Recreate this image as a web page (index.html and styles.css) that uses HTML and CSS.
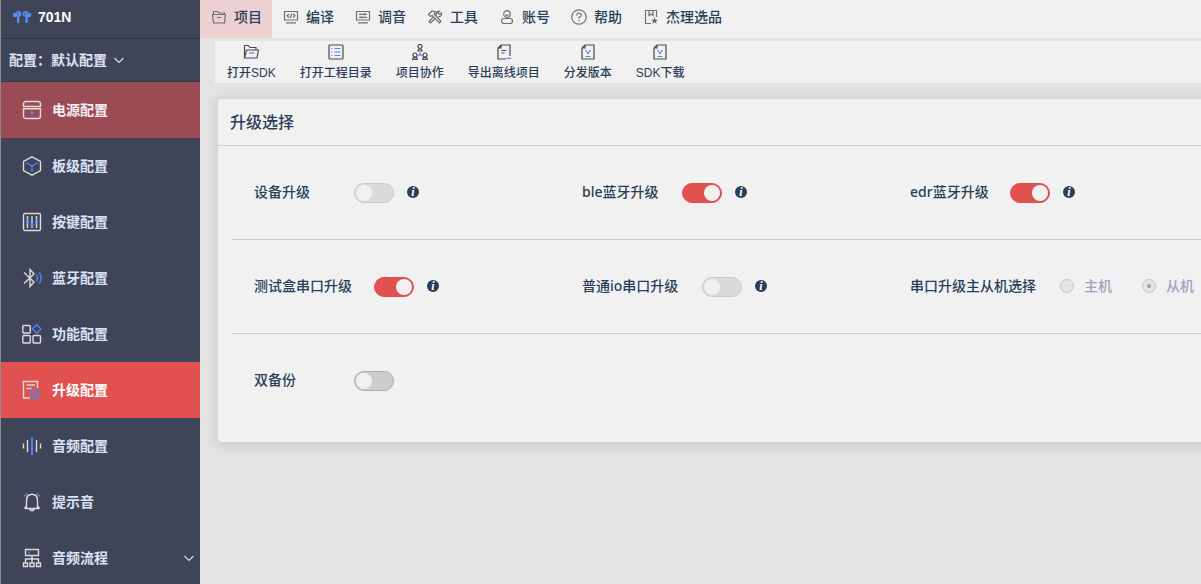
FILE: index.html
```html
<!DOCTYPE html>
<html lang="zh-CN">
<head>
    <meta charset="UTF-8">
    <meta name="viewport" content="width=device-width, initial-scale=1.0">
    <title>701N</title>
    <link rel="stylesheet" href="styles.css">
</head>
<body>
    <aside class="sidebar">
        <div class="brand">
            <svg class="icon" viewBox="0 0 20 20">
                <g class="bud"><circle cx="3" cy="8" r="2.200"/><circle cx="6.500" cy="6.800" r="2.900"/><circle cx="13.500" cy="6.800" r="2.900"/><circle cx="17" cy="8" r="2.200"/><rect x="5" y="9" width="2.200" height="7"/><rect x="13.500" y="9" width="2.200" height="7"/></g>
                <path class="bud-line" d="M4.500 5l1.500 4M12 5l1.500 4M7 6.500h1.500M15 6.500h1.500"/>
            </svg>
            <span class="brand-name">701N</span>
        </div>
        <div class="config">
            <label for="config">配置：</label>
            <div class="config-select">
                <select id="config"><option>默认配置</option></select>
                <svg class="chevron" viewBox="0 0 10 10"><path d="M.5 3L5 7.500 9.500 3"/></svg>
            </div>
        </div>
        <nav class="menu">
            <a class="menu-item warm" href="#">
                <svg class="icon" viewBox="0 0 20 20"><path d="M1.500 6.500V4q0-2.500 2.500-2.500h12q2.500 0 2.500 2.500v2.500zM1.500 8.800h17v7.200q0 2.500-2.500 2.500H4q-2.500 0-2.500-2.500z"/><path class="bolt" d="M10.500 9.500L7.500 13.500h2.200l-.7 2.800 3.300-4h-2.200z"/></svg>
                <span>电源配置</span>
            </a>
            <a class="menu-item" href="#">
                <svg class="icon" viewBox="0 0 20 20"><path d="M10 .9l8.500 4.600v9L10 19.100l-8.500-4.600v-9z"/><path class="blue" d="M4.500 6.800L10 10l5.500-3.200M10 10v6"/></svg>
                <span>板级配置</span>
            </a>
            <a class="menu-item" href="#">
                <svg class="icon" viewBox="0 0 20 20"><rect x="1.500" y="1.500" width="17" height="17" rx="1.500"/><path d="M5.500 4v12M10 4v12M14.500 4v12"/><g class="blue"><circle cx="5.500" cy="9.500" r="1.200"/><circle cx="10" cy="13" r="1.200"/><circle cx="14.500" cy="9.500" r="1.200"/></g></svg>
                <span>按键配置</span>
            </a>
            <a class="menu-item" href="#">
                <svg class="icon" viewBox="0 0 20 20"><path d="M2 4.500L12 14l-4 4.500v-17L12 6 2 15.500"/><path class="blue" d="M14.500 6.500q2 3.500 0 7M17.300 4.500q3.500 5.500 0 11"/></svg>
                <span>蓝牙配置</span>
            </a>
            <a class="menu-item" href="#">
                <svg class="icon" viewBox="0 0 20 20"><rect x=".8" y="1.500" width="7.500" height="7.500" rx="1"/><rect x=".8" y="11.500" width="7.500" height="7.500" rx="1"/><rect x="11" y="11.500" width="7.500" height="7.500" rx="1"/><path class="blue" d="M14.800.7l4.300 4.300-4.300 4.300L10.500 5z"/></svg>
                <span>功能配置</span>
            </a>
            <a class="menu-item active" href="#">
                <svg class="icon" viewBox="0 0 20 20"><path d="M8 18H1.500V1.500h14V8M4.500 5h8.500M4.500 8.500h5"/><path class="blue" d="M13 9.800l4 1.500v3.500q-.8 2.700-4 4-3.200-1.300-4-4v-3.500zM11 14.300l1.500 1.500 2.700-2.700"/></svg>
                <span>升级配置</span>
            </a>
            <a class="menu-item" href="#">
                <svg class="icon" viewBox="0 0 20 20"><path d="M1.500 7.500v5M5.500 4v12M14.500 4v12M18.500 7.500v5"/><path class="blue thick" d="M10 1v18"/></svg>
                <span>音频配置</span>
            </a>
            <a class="menu-item" href="#">
                <svg class="icon" viewBox="0 0 20 20"><path d="M2.500 16.500h15M4.500 16.500V9Q4.500 2.300 10 2.300T15.500 9v7.500M2.500 16.500l2-2.500M17.500 16.500l-2-2.500M7.500 17q2.500 3.500 5 0"/><path class="blue" d="M2 4.500l3-3M18 4.500l-3-3"/></svg>
                <span>提示音</span>
            </a>
            <a class="menu-item" href="#">
                <svg class="icon" viewBox="0 0 20 20"><path d="M3.500 1.500h13v6h-13zM10 7.500v7M3.500 14.500v-3.500h13v3.500M1.500 15h4v3.500h-4zM8 15h4v3.500H8zM14.500 15h4v3.500h-4z"/><path class="blue" d="M6 4.500h2"/></svg>
                <span>音频流程</span>
                <svg class="chevron" viewBox="0 0 10 10"><path d="M.5 3L5 7.500 9.500 3"/></svg>
            </a>
        </nav>
    </aside>

    <div class="content">
        <nav class="tabs">
            <a class="tab current" href="#">
                <svg viewBox="0 0 16 16"><path d="M2.500 14L1.500 5.500h13L13.500 14zM2.500 5.500v-3h4l1.500 1.500h5.500v1.500M6 8.500h4"/></svg>项目</a>
            <a class="tab" href="#">
                <svg viewBox="0 0 16 16"><path d="M1.500 2.500h13v8.500h-13zM3 13.800h10M6 5L4 6.800l2 1.800M10 5l2 1.800-2 1.800M8.700 4.500L7.300 9"/></svg>编译</a>
            <a class="tab" href="#">
                <svg viewBox="0 0 16 16"><path d="M1.500 2.500h13v8.500h-13zM3 13.800h10M4 5.300h8M4 8.300h8M9.500 4.300v2M6.500 7.300v2"/></svg>调音</a>
            <a class="tab" href="#">
                <svg viewBox="0 0 16 16"><path d="M1.500 5.500L5 2l4 1-2 2 7 7.500-1.500 1.500L5 6.500l-1.500 1zM9.500 6.500Q8.500 2.500 12.500 2L11 4l1.500 1.500L14.500 4Q15 8 11 7.800M6 8.500l-4 4L3.500 14l4.200-4"/></svg>工具</a>
            <a class="tab" href="#">
                <svg viewBox="0 0 16 16"><circle cx="8" cy="5" r="3.300"/><path d="M6.500 5.800q1.500 1.200 3 0"/><rect x="2.500" y="9.500" width="11" height="5" rx="2.500"/></svg>账号</a>
            <a class="tab" href="#">
                <svg viewBox="0 0 16 16"><circle cx="8" cy="8" r="7.200"/><path d="M5.800 6.500Q5.800 4 8 4t2.200 2.200Q10.200 7.500 8 8.300v1.500M8 11v1.300"/></svg>帮助</a>
            <a class="tab" href="#">
                <svg viewBox="0 0 16 16"><path d="M8 14.500H2.500v-13h11V8M6 1.500v5L8 5l2 1.500v-5"/><path class="star" d="M11.500 8.500l1 2.200h2.300L13 12.200l.7 2.500-2.200-1.400-2.200 1.400.7-2.500-1.800-1.500h2.300z"/></svg>杰理选品</a>
        </nav>

        <div class="toolbar">
            <button class="tool" type="button">
                <svg viewBox="0 0 16 16"><path d="M1.500 14V1.500h4L7 3.500h6v2.500M1.500 14L3.500 6h12L14 14z"/><path class="blue" d="M6 9h5.500"/></svg>打开SDK</button>
            <button class="tool" type="button">
                <svg viewBox="0 0 16 16"><rect x="1" y="1" width="14" height="14" rx="1"/><path class="blue" d="M3.500 4.500h1M6.500 4.500h6M3.500 8h1M6.500 8h6M3.500 11.500h1M6.500 11.500h6"/></svg>打开工程目录</button>
            <button class="tool" type="button">
                <svg viewBox="0 0 16 16"><circle cx="8" cy="2.500" r="2"/><path d="M6 7q0-2 2-2t2 2z"/><circle cx="3" cy="11" r="2"/><path d="M.7 15.300q0-2 2.300-2t2.300 2z"/><circle cx="13" cy="11" r="2"/><path d="M10.700 15.300q0-2 2.300-2t2.300 2z"/><path class="blue" d="M8 8.500v1.500L6.200 12M8 10l1.800 2"/></svg>项目协作</button>
            <button class="tool" type="button">
                <svg viewBox="0 0 16 16"><path d="M14 12V1H5L2 4v11h8M5 1v3H2M5.500 6.500h5M5.500 9h3"/><path class="blue" d="M10.500 14.300h4.500"/></svg>导出离线项目</button>
            <button class="tool" type="button">
                <svg viewBox="0 0 16 16"><path d="M5 1h9v14H2V4zM5 1v3H2"/><path class="blue" d="M5.500 6L8 9.500 10.500 6M5.500 12.500h5"/></svg>分发版本</button>
            <button class="tool" type="button">
                <svg viewBox="0 0 16 16"><path d="M5 1h9v14H2V4zM5 1v3H2"/><path class="blue" d="M5.500 6L8 9.500 10.500 6M5.500 12.500h5"/></svg>SDK下载</button>
        </div>

        <main class="card">
            <h1 class="card-title">升级选择</h1>
            <div class="card-body">
                <div class="row">
                    <div class="field">
                        <label class="label" for="device">设备升级</label>
                        <input class="switch" type="checkbox" id="device" disabled>
                        <button class="info" type="button">i</button>
                    </div>
                    <div class="field">
                        <label class="label" for="ble">ble蓝牙升级</label>
                        <input class="switch" type="checkbox" id="ble" checked>
                        <button class="info" type="button">i</button>
                    </div>
                    <div class="field">
                        <label class="label" for="edr">edr蓝牙升级</label>
                        <input class="switch" type="checkbox" id="edr" checked>
                        <button class="info" type="button">i</button>
                    </div>
                </div>
                <div class="row">
                    <div class="field">
                        <label class="label medium" for="testbox">测试盒串口升级</label>
                        <input class="switch" type="checkbox" id="testbox" checked>
                        <button class="info" type="button">i</button>
                    </div>
                    <div class="field">
                        <label class="label medium" for="io">普通io串口升级</label>
                        <input class="switch" type="checkbox" id="io" disabled>
                        <button class="info" type="button">i</button>
                    </div>
                    <div class="field" role="radiogroup" aria-labelledby="role-label">
                        <span class="label wide" id="role-label">串口升级主从机选择</span>
                        <label class="choice"><input type="radio" name="role" disabled>主机</label>
                        <label class="choice"><input type="radio" name="role" checked disabled>从机</label>
                    </div>
                </div>
                <div class="row">
                    <div class="field">
                        <label class="label" for="backup">双备份</label>
                        <input class="switch" type="checkbox" id="backup">
                    </div>
                </div>
            </div>
        </main>
    </div>
</body>
</html>
```
FILE: styles.css
```css
:root {
    --color-side: #3f4459;
    --color-page: #e4e4e4;
    --color-panel: #f1f1f1;
    --color-text: #2c3e57;
    --color-side-text: #dbe3f3;
    --color-red: #e1514f;
    --color-line: #cccccc;
    --color-blue: #4f86ee;
}

* {
    box-sizing: border-box;
}

body {
    display: flex;
    height: 100vh;
    margin: 0;
    overflow: hidden;
    background: var(--color-page);
    color: var(--color-text);
    font: 500 14px/20px "Noto Sans", "Noto Sans CJK SC", sans-serif;
}

a {
    color: inherit;
    text-decoration: none;
}

button,
select {
    margin: 0;
    padding: 0;
    border: none;
    background: none;
    color: inherit;
    font: inherit;
}

svg {
    flex: none;
    fill: none;
    stroke: #707070;
    stroke-width: 1.2;
}

svg .blue {
    stroke: var(--color-blue);
}

svg .thick {
    stroke-width: 2;
}

svg .star {
    fill: #666;
    stroke: none;
}

svg .bolt {
    fill: var(--color-blue);
    stroke: none;
}

svg .bud {
    fill: #5592f0;
    stroke: none;
}

svg .bud-line {
    stroke: #3565b5;
    stroke-width: 1;
}

/* sidebar */
.sidebar {
    flex: none;
    width: 200px;
    overflow: hidden;
    border-left: 1px solid #8c8c8c;
    background: var(--color-side);
    color: var(--color-side-text);
    font-weight: 700;
}

.sidebar svg {
    stroke: #dcdcdc;
    stroke-width: 1.4;
}

.icon {
    width: 20px;
    height: 20px;
}

.brand {
    display: flex;
    align-items: center;
    gap: 6px;
    height: 39px;
    padding: 0 11px 4px;
    border-bottom: 1px solid #33384b;
}

.brand-name {
    color: #fff;
    font-family: "Liberation Sans", sans-serif;
}

.config {
    display: flex;
    align-items: center;
    height: 43px;
    padding-left: 8px;
    border-bottom: 1px solid #33384b;
}

.config-select {
    position: relative;
}

.config-select select {
    display: block;
    width: 76px;
    appearance: none;
}

.config-select .chevron {
    position: absolute;
    top: 5px;
    right: 3px;
    pointer-events: none;
}

.sidebar .chevron {
    width: 10px;
    height: 10px;
    stroke-width: 1.2;
}

.menu-item {
    display: flex;
    align-items: center;
    gap: 10px;
    height: 56px;
    padding: 0 6px 0 21px;
}

.menu-item .chevron {
    margin-left: auto;
}

.menu-item.warm {
    background: #9b4b54;
    color: #f4edf0;
}

.menu-item.active {
    background: var(--color-red);
    color: #fff;
}

/* top navigation */
.content {
    flex: 1;
    min-width: 0;
}

.tabs {
    display: flex;
    height: 38px;
    background: var(--color-panel);
}

.tab {
    display: flex;
    align-items: center;
    gap: 7px;
    padding: 0 10px 4px 11px;
}

.tab svg {
    width: 16px;
    height: 16px;
}

.tab.current {
    background: #edd1d2;
}

.toolbar {
    display: flex;
    height: 42px;
    margin: 3px 0 16px 15px;
    background: var(--color-panel);
    font-family: "Liberation Sans", "Noto Sans CJK SC", sans-serif;
    font-size: 12px;
}

.tool {
    display: flex;
    flex-direction: column;
    align-items: center;
    gap: 3px;
    padding: 3px 12px 0;
}

.tool svg {
    width: 16px;
    height: 16px;
    stroke: #4a4a4a;
}

/* settings card */
.card {
    width: max-content;
    min-width: 100%;
    margin-left: 18px;
    border-radius: 4px;
    background: var(--color-panel);
    box-shadow: 0 2px 12px 4px rgba(0, 0, 0, 0.09);
}

.card-title {
    margin: 0;
    padding: 11px 12px;
    border-bottom: 1px solid var(--color-line);
    font-size: 16px;
    font-weight: 500;
    line-height: 24px;
}

.card-body {
    padding: 0 14px 14px;
}

.row {
    display: grid;
    grid-template-columns: repeat(3, 328px);
    height: 94px;
    border-bottom: 1px solid var(--color-line);
}

.row:last-child {
    border-bottom: none;
}

.field {
    display: flex;
    align-items: center;
    padding-left: 22px;
}

.label {
    flex: none;
    width: 100px;
    padding-bottom: 2px;
}

.label.medium {
    width: 120px;
}

.label.wide {
    width: 150px;
}

.switch {
    display: flex;
    align-items: center;
    width: 40px;
    height: 20px;
    margin: 0 13px 0 0;
    padding: 0 1px;
    border: 1px solid #adadad;
    border-radius: 10px;
    background: #cdcdcd;
    appearance: none;
}

.switch::before {
    content: "";
    width: 16px;
    height: 16px;
    border-radius: 50%;
    background: var(--color-panel);
}

.switch:checked {
    justify-content: flex-end;
    border-color: var(--color-red);
    background: var(--color-red);
}

.switch:disabled {
    border-color: #c8c8c8;
    background: #dbdbdb;
}

.info {
    width: 12px;
    height: 12px;
    margin-bottom: 2px;
    border-radius: 50%;
    background: var(--color-text);
    color: #fff;
    font: italic 700 12px/12px "Liberation Serif", serif;
    text-align: center;
}

.choice {
    display: flex;
    flex: none;
    align-items: center;
    gap: 10px;
    margin-right: 30px;
    padding-bottom: 2px;
    color: #a0a4bb;
}

.choice input {
    display: grid;
    place-items: center;
    width: 14px;
    height: 14px;
    margin: 0;
    border: 1px solid #c4c4c4;
    border-radius: 50%;
    background: #e4e4e4;
    appearance: none;
}

.choice input:checked::before {
    content: "";
    width: 4px;
    height: 4px;
    border-radius: 50%;
    background: #9a9eb8;
}
```
